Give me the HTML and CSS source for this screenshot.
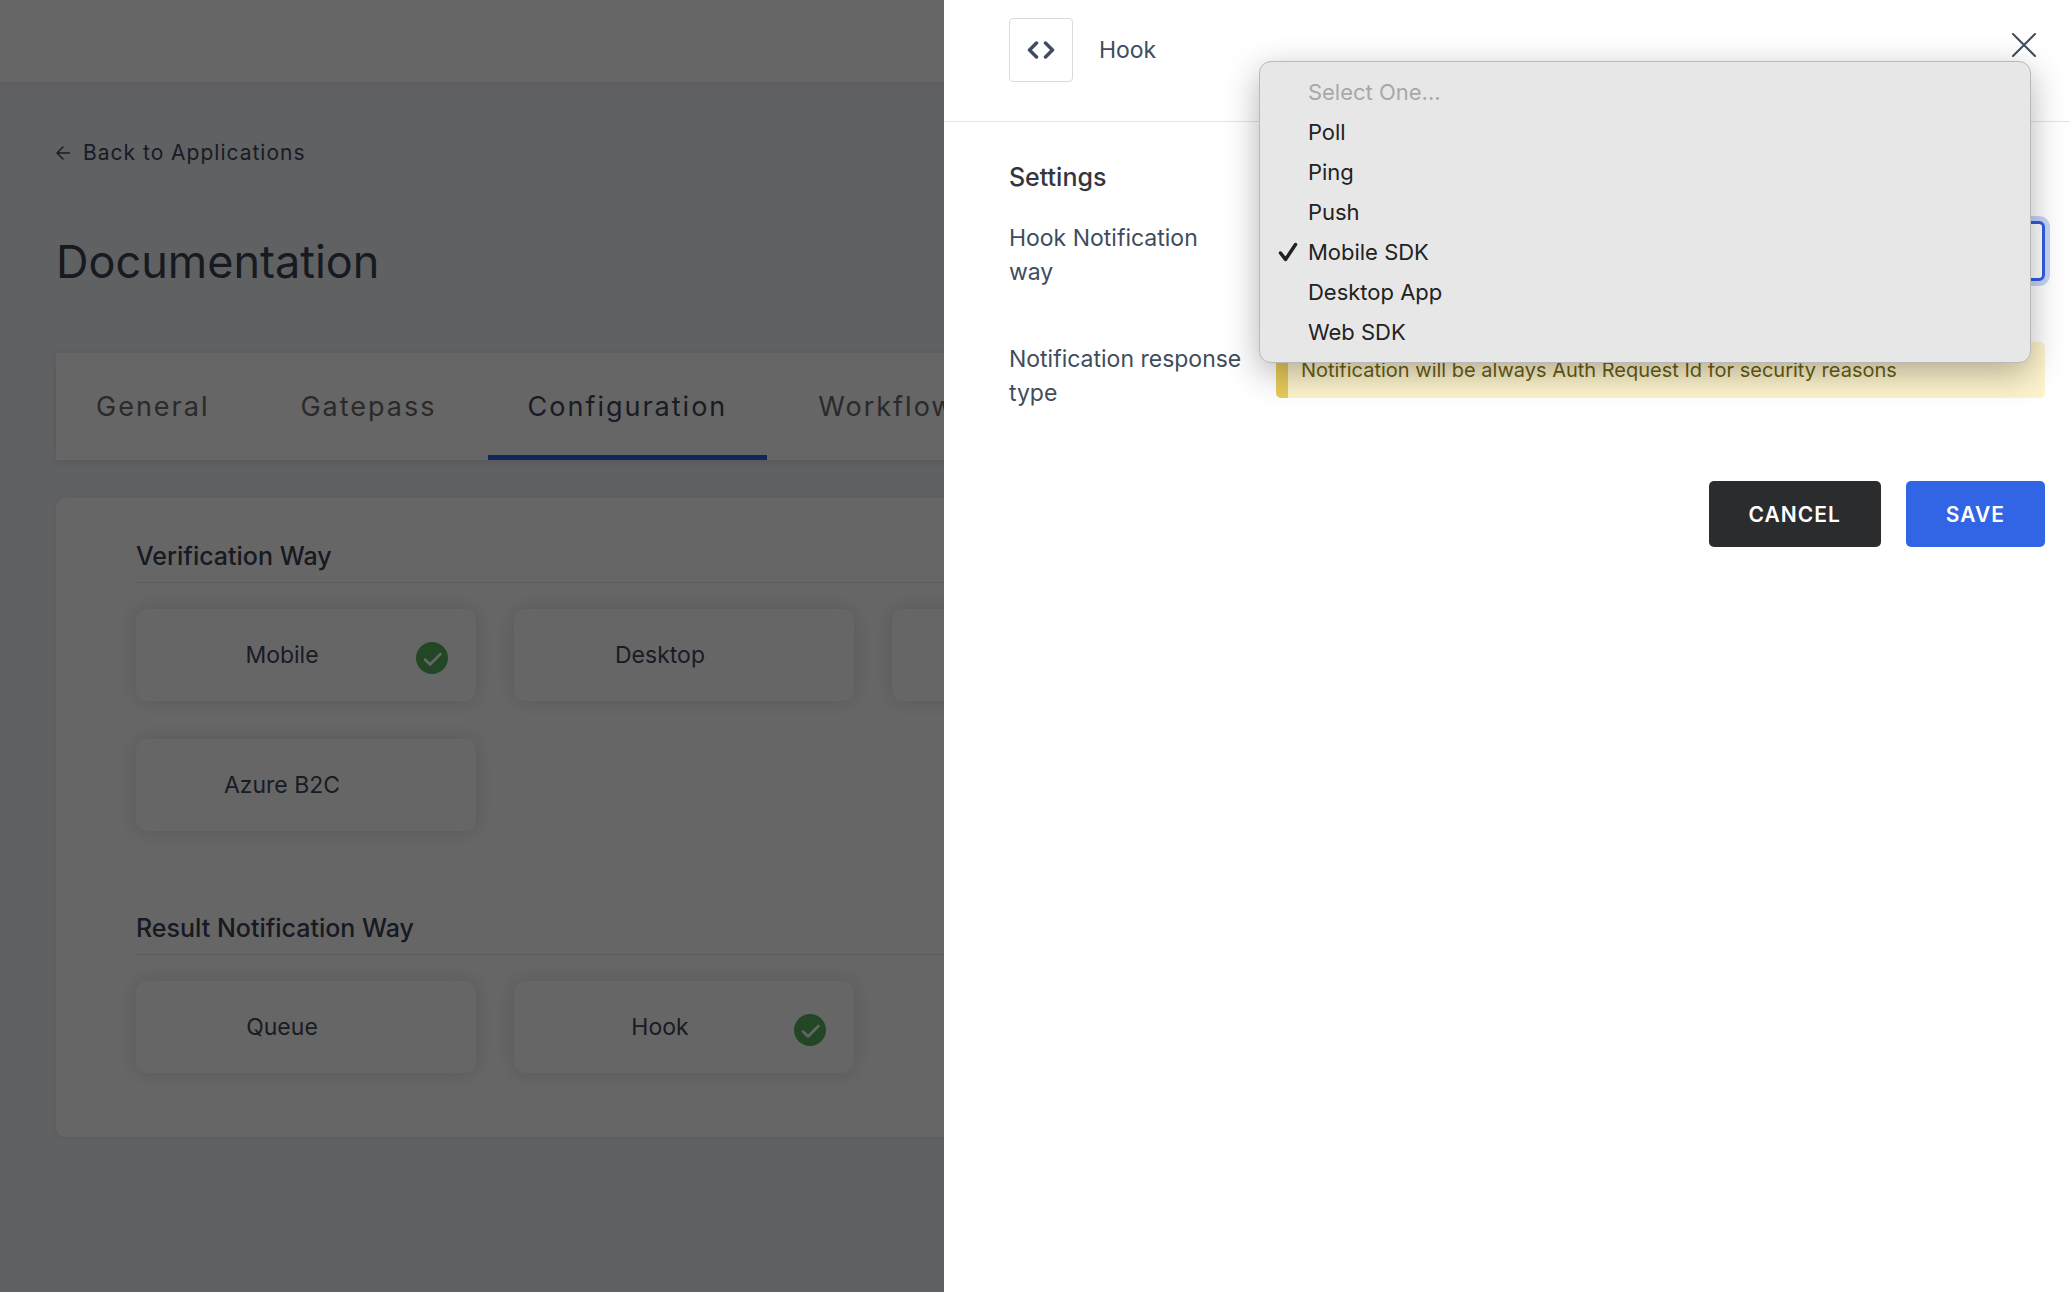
FILE: index.html
```html
<!DOCTYPE html>
<html lang="en">
<head>
  <meta charset="utf-8">
  <meta name="viewport" content="width=device-width, initial-scale=1">
  <title>Documentation - Configuration</title>
  <link rel="stylesheet" href="styles.css">
</head>
<body>
  <header class="topbar"></header>

  <main class="page">
    <a class="back" href="#applications">
      <svg class="back-icon" viewBox="0 0 14 14" aria-hidden="true"><path d="M13.500 7H1M7 1L1 7l6 6"/></svg>
      Back to Applications
    </a>
    <h1 class="title">Documentation</h1>

    <nav class="tabs">
      <a class="tab" href="#general">General</a>
      <a class="tab" href="#gatepass">Gatepass</a>
      <a class="tab tab-active" href="#configuration" aria-current="page">Configuration</a>
      <a class="tab" href="#workflow">Workflow</a>
    </nav>

    <div class="card">
      <section class="group">
        <h2 class="group-title">Verification Way</h2>
        <div class="options">
          <button class="option" type="button">
            <span class="option-label">Mobile</span>
            <span class="option-state"><svg viewBox="0 0 32 32" aria-hidden="true"><circle cx="16" cy="16" r="16" fill="#58b25a"/><path d="M9 17.500l5 5L24.500 12" fill="none" stroke="#fff" stroke-width="2.500" stroke-linecap="round" stroke-linejoin="round"/></svg></span>
          </button>
          <button class="option" type="button">
            <span class="option-label">Desktop</span>
            <span class="option-state"></span>
          </button>
          <button class="option" type="button">
            <span class="option-label"></span>
            <span class="option-state"></span>
          </button>
          <button class="option" type="button">
            <span class="option-label">Azure B2C</span>
            <span class="option-state"></span>
          </button>
        </div>
      </section>

      <section class="group">
        <h2 class="group-title">Result Notification Way</h2>
        <div class="options">
          <button class="option" type="button">
            <span class="option-label">Queue</span>
            <span class="option-state"></span>
          </button>
          <button class="option" type="button">
            <span class="option-label">Hook</span>
            <span class="option-state"><svg viewBox="0 0 32 32" aria-hidden="true"><circle cx="16" cy="16" r="16" fill="#58b25a"/><path d="M9 17.500l5 5L24.500 12" fill="none" stroke="#fff" stroke-width="2.500" stroke-linecap="round" stroke-linejoin="round"/></svg></span>
          </button>
        </div>
      </section>
    </div>
  </main>

  <div class="overlay"></div>

  <aside class="drawer" aria-label="Hook">
    <header class="drawer-head">
      <span class="drawer-icon">
        <svg viewBox="0 0 28 18" aria-hidden="true"><path d="M9.500 2L2.500 9l7 7M18.500 2l7 7-7 7"/></svg>
      </span>
      <span class="drawer-name">Hook</span>
      <button class="close" type="button" aria-label="Close">
        <svg viewBox="0 0 24 24" aria-hidden="true"><path d="M1 1l22 22M23 1L1 23"/></svg>
      </button>
    </header>

    <form class="settings">
      <h2 class="settings-title">Settings</h2>
      <div class="field">
        <label class="field-label" for="notification-way">Hook Notification way</label>
        <div class="field-control">
          <select class="select" id="notification-way">
            <option disabled>Select One...</option>
            <option>Poll</option>
            <option>Ping</option>
            <option>Push</option>
            <option selected>Mobile SDK</option>
            <option>Desktop App</option>
            <option>Web SDK</option>
          </select>
          <ul class="menu" role="listbox" aria-label="Hook Notification way">
            <li class="menu-item menu-item-disabled" role="option">Select One...</li>
            <li class="menu-item" role="option">Poll</li>
            <li class="menu-item" role="option">Ping</li>
            <li class="menu-item" role="option">Push</li>
            <li class="menu-item" role="option" aria-selected="true"><svg class="menu-check" viewBox="0 0 20 20" aria-hidden="true"><path d="M2.500 11l5 6.500L17.500 2.500"/></svg>Mobile SDK</li>
            <li class="menu-item" role="option">Desktop App</li>
            <li class="menu-item" role="option">Web SDK</li>
          </ul>
        </div>
      </div>
      <div class="field">
        <span class="field-label">Notification response type</span>
        <div class="field-control">
          <p class="notice">Notification will be always Auth Request Id for security reasons</p>
        </div>
      </div>
      <div class="actions">
        <button class="btn btn-dark" type="button">CANCEL</button>
        <button class="btn btn-primary" type="submit">SAVE</button>
      </div>
    </form>
  </aside>
</body>
</html>
```
FILE: styles.css
```css
* {
  box-sizing: border-box;
}

body {
  margin: 0;
  min-height: 100vh;
  overflow: hidden;
  background: #f0f2f7;
  color: #3f475a;
  font-family: Inter, "Liberation Sans", sans-serif;
  font-size: 23px;
}

button {
  font-family: inherit;
  color: inherit;
}

a {
  color: inherit;
  text-decoration: none;
}

h1,
h2,
p,
ul {
  margin: 0;
  padding: 0;
}

/* Page behind the drawer */

.topbar {
  height: 82px;
  background: #fff;
  box-shadow: 0 1px 6px rgba(0, 0, 0, 0.08);
}

.page {
  padding: 55px 56px 80px;
}

.back {
  display: flex;
  align-items: center;
  gap: 13px;
  font-size: 21px;
  line-height: 32px;
  letter-spacing: 1px;
}

.back-icon {
  width: 14px;
  height: 14px;
  fill: none;
  stroke: currentColor;
  stroke-width: 1.5;
  stroke-linecap: round;
  stroke-linejoin: round;
}

.title {
  margin: 65px 0 63px;
  color: #3a4154;
  font-size: 45px;
  font-weight: 400;
  line-height: 56px;
}

.tabs {
  display: flex;
  gap: 11px;
  height: 107px;
  background: #fff;
  box-shadow: 0 2px 8px rgba(60, 60, 110, 0.12);
}

.tab {
  padding: 37px 40px 0;
  border-bottom: 5px solid transparent;
  color: #6a6a6a;
  font-size: 27px;
  line-height: 34px;
  letter-spacing: 2px;
}

.tab-active {
  border-color: #2f5fe6;
  color: #3f475a;
}

.card {
  margin-top: 38px;
  padding: 41px 80px 64px;
  border-radius: 10px;
  background: #fff;
  box-shadow: 0 1px 6px rgba(0, 0, 0, 0.08);
}

.group + .group {
  margin-top: 80px;
}

.group-title {
  margin-bottom: 26px;
  padding-bottom: 9px;
  border-bottom: 1px solid #e4e5e8;
  color: #3a4154;
  font-size: 25px;
  font-weight: 500;
  line-height: 34px;
}

.options {
  display: grid;
  grid-template-columns: repeat(3, 340px);
  gap: 38px;
}

.option {
  display: flex;
  align-items: center;
  height: 92px;
  padding: 0 28px 0 12px;
  border: 0;
  border-radius: 12px;
  background: #fff;
  box-shadow: 0 0 20px rgba(0, 0, 0, 0.14);
  font-size: 23px;
}

.option-label {
  flex: 1;
}

.option-state {
  width: 32px;
  height: 32px;
  margin-top: 6px;
}

.option-state svg {
  display: block;
}

.overlay {
  position: fixed;
  inset: 0;
  background: rgba(0, 0, 0, 0.6);
}

/* Drawer */

.drawer {
  position: fixed;
  top: 0;
  right: 0;
  bottom: 0;
  width: 54.4vw;
  background: #fff;
  color: #414c5e;
}

.drawer-head {
  display: flex;
  align-items: center;
  gap: 26px;
  padding: 18px 32px 39px 65px;
  border-bottom: 1px solid #e3e4e6;
}

.drawer-icon {
  display: grid;
  place-items: center;
  width: 64px;
  height: 64px;
  border: 1px solid #d9dadc;
  border-radius: 4px;
}

.drawer-icon svg {
  width: 28px;
  height: 18px;
  fill: none;
  stroke: currentColor;
  stroke-width: 3.5;
  stroke-linecap: round;
  stroke-linejoin: round;
}

.close {
  align-self: flex-start;
  width: 28px;
  height: 54px;
  margin-left: auto;
  padding: 0;
  border: 0;
  background: none;
}

.close svg {
  display: block;
  width: 24px;
  height: 24px;
  margin: auto;
  fill: none;
  stroke: currentColor;
  stroke-width: 2;
  stroke-linecap: round;
}

.settings {
  padding: 37px 25px 40px 65px;
}

.settings-title {
  margin-bottom: 26px;
  color: #34363d;
  font-size: 25px;
  font-weight: 500;
  line-height: 36px;
}

.field {
  display: grid;
  grid-template-columns: 236px 1fr;
  column-gap: 31px;
}

.field + .field {
  margin-top: 53px;
}

.field-label {
  font-size: 23px;
  line-height: 34px;
}

.field-control {
  position: relative;
}

.select {
  display: block;
  width: 100%;
  height: 60px;
  padding: 0 20px;
  border: 3px solid #2f5fe0;
  border-radius: 6px;
  appearance: none;
  background: #fff;
  box-shadow: 0 0 0 5px #c9d5f7;
  color: inherit;
  font: inherit;
}

.menu {
  position: absolute;
  top: -160px;
  right: 14px;
  left: -17px;
  z-index: 1;
  padding: 10px 0;
  border: 1px solid #b9b9b9;
  border-radius: 12px;
  background: #e7e7e7;
  box-shadow: 0 10px 34px rgba(0, 0, 0, 0.3);
  color: #222;
  list-style: none;
}

.menu-item {
  position: relative;
  padding-left: 48px;
  font-size: 22px;
  line-height: 40px;
}

.menu-item-disabled {
  color: #a8a8a8;
}

.menu-check {
  position: absolute;
  top: 10px;
  left: 18px;
  width: 20px;
  height: 20px;
  fill: none;
  stroke: currentColor;
  stroke-width: 3.5;
  stroke-linecap: round;
  stroke-linejoin: round;
}

.notice {
  padding: 14px 13px;
  border-left: 12px solid #e6cb5a;
  border-radius: 5px;
  background: #fdf3cc;
  color: #6b5f14;
  font-size: 20px;
  line-height: 28px;
}

.actions {
  display: flex;
  justify-content: flex-end;
  gap: 25px;
  margin-top: 71px;
}

.btn {
  height: 66px;
  padding: 0 40px;
  border: 0;
  border-radius: 5px;
  color: #fff;
  font-size: 21px;
  font-weight: 600;
  letter-spacing: 1px;
}

.btn-dark {
  background: #2b2c2e;
}

.btn-primary {
  background: #3264e6;
}
```
